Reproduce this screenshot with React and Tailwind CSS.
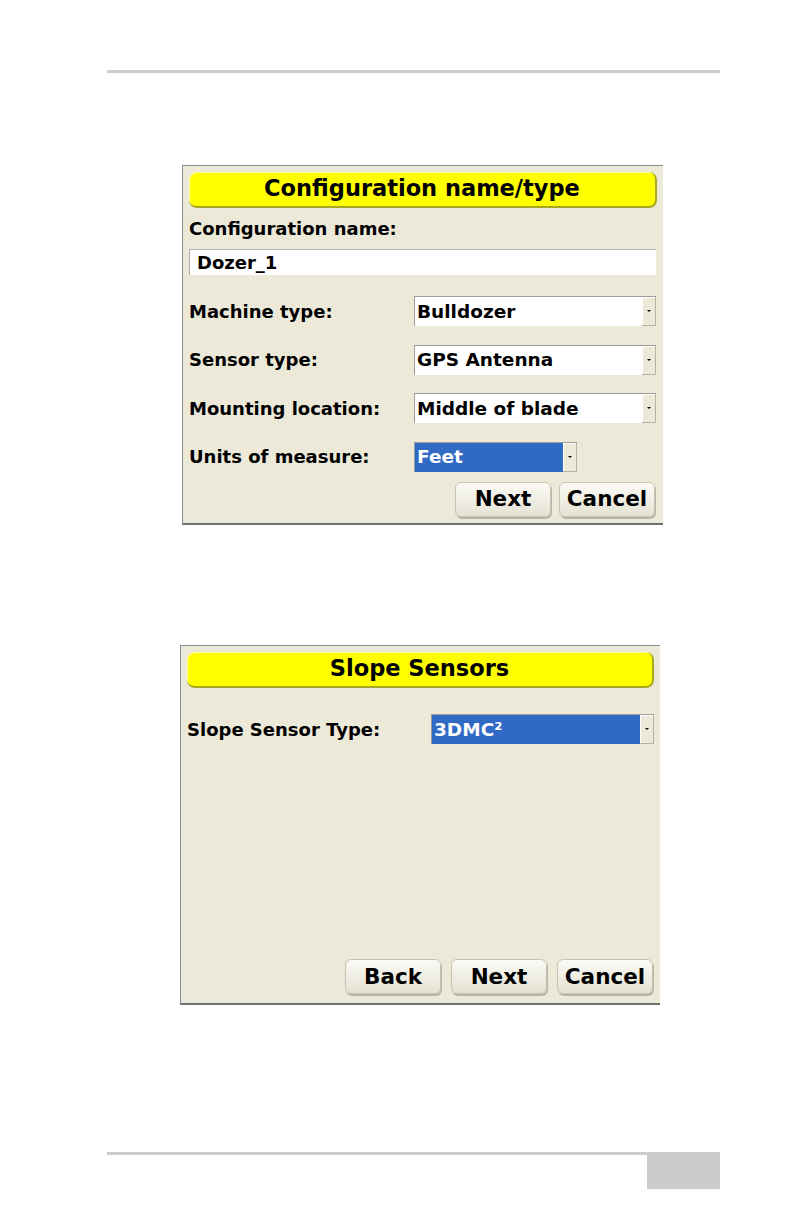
import React from 'react';

const font = { fontFamily: '"DejaVu Sans", Verdana, sans-serif' };

// XP-style combo box
const Combo = ({ value, selected, className = '' }) => (
  <div className={`flex h-[30px] border-t border-l border-[#9c9c9c] ${selected ? 'bg-[#316ac5]' : 'bg-white'} ${className}`}>
    <div className={`flex-1 flex items-center pl-[2px] text-[18.5px] font-bold whitespace-nowrap ${selected ? 'text-white' : 'text-black'}`}>
      {value}
    </div>
    <div className="w-[14px] flex items-center justify-center bg-[#ece9d8] border-r border-b border-[#b5b2a2] shadow-[inset_1px_1px_0_#ffffff]">
      <span className="block w-0 h-0 border-l-[2px] border-r-[2px] border-t-[2px] border-l-transparent border-r-transparent border-t-black" />
    </div>
  </div>
);

const Btn = ({ children }) => (
  <button className="w-[96px] h-[35px] rounded-[6px] bg-gradient-to-b from-[#fbfbf6] to-[#e4e1d3] border border-[#c5c2b2] shadow-[1px_2px_0_#b8b5a5] text-[21.5px] font-bold text-black leading-none">
    {children}
  </button>
);

const Header = ({ children }) => (
  <div className="h-[36px] rounded-[8px] bg-[#ffff00] border-r-2 border-b-2 border-[#a8a820] shadow-[inset_1px_1px_0_#ffffa0] flex items-center justify-center text-[22.5px] font-bold text-black whitespace-nowrap">
    {children}
  </div>
);

const Row = ({ label, children }) => (
  <div className="flex items-center">
    <div className="w-[225px] text-[18px] font-bold text-black whitespace-nowrap">{label}</div>
    {children}
  </div>
);

export default function App() {
  return (
    <div style={font} className="w-[793px] h-[1225px] bg-white relative overflow-hidden">
      {/* top rule */}
      <div className="pt-[70px] pl-[107px]">
        <div className="w-[613px] h-[3px] bg-[#cccccc]" />
      </div>

      {/* Configuration name/type panel */}
      <div className="ml-[182px] mt-[92px] w-[481px] h-[360px] bg-[#ece9d8] border-t border-l border-[#8e8e8e] border-b-2 border-b-[#707070] pl-[6px] pr-[6px] pt-[6px]">
        <Header>Configuration name/type</Header>
        <div className="mt-[10px] text-[18px] font-bold leading-[22px] text-black">Configuration name:</div>
        <div className="mt-[9px] h-[26px] mr-[1px] bg-white border-t border-l border-[#b0b0b0] flex items-center pl-[7px] text-[18px] font-bold text-black">
          Dozer_1
        </div>
        <div className="mt-[21px] flex flex-col gap-[18.5px]">
          <Row label="Machine type:"><Combo value="Bulldozer" className="w-[242px]" /></Row>
          <Row label="Sensor type:"><Combo value="GPS Antenna" className="w-[242px]" /></Row>
          <Row label="Mounting location:"><Combo value="Middle of blade" className="w-[242px]" /></Row>
          <Row label="Units of measure:"><Combo value="Feet" selected className="w-[163px]" /></Row>
        </div>
        <div className="mt-[10px] flex justify-end gap-[8px] pr-[2px]">
          <Btn>Next</Btn>
          <Btn>Cancel</Btn>
        </div>
      </div>

      {/* Slope Sensors panel */}
      <div className="ml-[180px] mt-[120px] w-[480px] h-[360px] bg-[#ece9d8] border-t border-l border-[#8e8e8e] border-b-2 border-b-[#707070] pl-[6px] pr-[6px] pt-[6px]">
        <Header>Slope Sensors</Header>
        <div className="mt-[26px] flex items-center">
          <div className="w-[244px] text-[18px] font-bold text-black whitespace-nowrap">Slope Sensor Type:</div>
          <Combo value="3DMC²" selected className="w-[223px]" />
        </div>
        <div className="mt-[215px] flex justify-end gap-[10px] pr-[1px]">
          <Btn>Back</Btn>
          <Btn>Next</Btn>
          <Btn>Cancel</Btn>
        </div>
      </div>

      {/* bottom rule with page tab */}
      <div className="absolute left-[107px] top-[1152px] flex items-start">
        <div className="w-[540px] h-[3px] bg-[#cccccc]" />
        <div className="w-[73px] h-[37px] bg-[#cccccc]" />
      </div>
    </div>
  );
}
